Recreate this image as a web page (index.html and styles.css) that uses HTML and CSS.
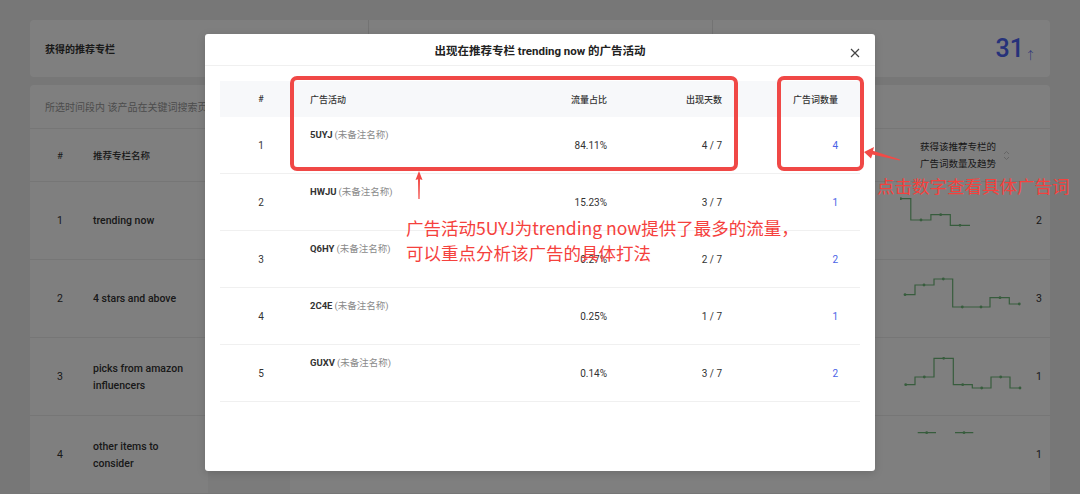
FILE: index.html
```html
<!DOCTYPE html>
<html lang="zh">
<head>
<meta charset="utf-8">
<title>推荐专栏广告活动</title>
<link rel="stylesheet" href="styles.css">
</head>
<body>
<div class="page">
  <section class="card stats">
    <div class="stat"><span class="stat-label">获得的推荐专栏</span></div>
    <div class="stat"><span class="stat-label">推荐专栏流量</span></div>
    <div class="stat stat-end"><span class="big">31</span><span class="up">↑</span></div>
  </section>

  <section class="card list">
    <div class="desc">所选时间段内 该产品在关键词搜索页面中出现在以下推荐专栏</div>
    <div class="bg-row bg-head">
      <div class="c-idx">#</div>
      <div class="c-name">推荐专栏名称</div>
      <div class="c-band"></div>
      <div class="c-mid"></div>
      <div class="c-trend head-trend">
        <span class="trend-title">获得该推荐专栏的<br>广告词数量及趋势</span>
        <svg class="sort" width="7" height="11" viewBox="0 0 7 11"><path d="M1 4 L3.5 1.5 L6 4 M1 7 L3.5 9.5 L6 7" fill="none" stroke="#c4c4c4" stroke-width="0.9"/></svg>
      </div>
    </div>
    <div class="bg-row">
      <div class="c-idx">1</div>
      <div class="c-name">trending now</div>
      <div class="c-band"></div>
      <div class="c-mid"></div>
      <div class="c-trend">
        <svg class="chart" width="125" height="77" viewBox="0 0 125 77">
          <path d="M0.7 16.7 H10.8 V38 H30.9 V32.7 H50.3 V43.3 H70" />
          <circle cx="0.7" cy="16.7" r="1.4"/><circle cx="21" cy="38" r="1.4"/><circle cx="40.7" cy="32.7" r="1.4"/><circle cx="60" cy="43.3" r="1.4"/>
        </svg>
        <span class="cnt">2</span>
      </div>
    </div>
    <div class="bg-row">
      <div class="c-idx">2</div>
      <div class="c-name">4 stars and above</div>
      <div class="c-band"></div>
      <div class="c-mid"></div>
      <div class="c-trend">
        <svg class="chart" width="125" height="77" viewBox="0 0 125 77">
          <path d="M5 34.7 H15 V25 H34 V19 H52.7 V47 H90 V37.7 H109.3 V44 H119.3" />
          <circle cx="5" cy="34.7" r="1.4"/><circle cx="24" cy="25" r="1.4"/><circle cx="43.3" cy="19" r="1.4"/><circle cx="62.3" cy="47" r="1.4"/><circle cx="81" cy="47" r="1.4"/><circle cx="100" cy="37.7" r="1.4"/><circle cx="119.3" cy="44" r="1.4"/>
        </svg>
        <span class="cnt">3</span>
      </div>
    </div>
    <div class="bg-row">
      <div class="c-idx">3</div>
      <div class="c-name">picks from amazon influencers</div>
      <div class="c-band"></div>
      <div class="c-mid"></div>
      <div class="c-trend">
        <svg class="chart" width="125" height="77" viewBox="0 0 125 77">
          <path d="M5.7 46.7 H15 V39 H34 V20.3 H53.3 V46.7 H72.3 V50 H91 V39 H110 V50 H120.7" />
          <circle cx="5.7" cy="46.7" r="1.4"/><circle cx="24.3" cy="39" r="1.4"/><circle cx="43.7" cy="20.3" r="1.4"/><circle cx="62.7" cy="46.7" r="1.4"/><circle cx="81.7" cy="50" r="1.4"/><circle cx="100.7" cy="39" r="1.4"/><circle cx="120" cy="50" r="1.4"/>
        </svg>
        <span class="cnt">1</span>
      </div>
    </div>
    <div class="bg-row">
      <div class="c-idx">4</div>
      <div class="c-name">other items to consider</div>
      <div class="c-band"></div>
      <div class="c-mid"></div>
      <div class="c-trend">
        <svg class="chart" width="125" height="77" viewBox="0 0 125 77">
          <path d="M17.7 16.7 H36 M55 16.7 H73.3" />
          <circle cx="26.7" cy="16.7" r="1.4"/><circle cx="64" cy="16.7" r="1.4"/>
        </svg>
        <span class="cnt">1</span>
      </div>
    </div>
  </section>
</div>

<div class="mask"></div>

<div class="modal">
  <div class="modal-head">
    <span class="modal-title">出现在推荐专栏 trending now 的广告活动</span>
    <svg class="close" width="10" height="10" viewBox="0 0 10 10"><path d="M1 1 L9 9 M9 1 L1 9" stroke="#444" stroke-width="1.2"/></svg>
  </div>
  <div class="modal-body">
    <div class="t-row t-head">
      <div class="t-idx">#</div>
      <div class="t-camp">广告活动</div>
      <div class="t-num">流量占比</div>
      <div class="t-num">出现天数</div>
      <div class="t-num t-kw">广告词数量</div>
    </div>
    <div class="t-row">
      <div class="t-idx">1</div>
      <div class="t-camp"><b>5UYJ</b> <span class="note">(未备注名称)</span></div>
      <div class="t-num">84.11%</div>
      <div class="t-num">4 / 7</div>
      <div class="t-num t-kw"><span class="link">4</span></div>
    </div>
    <div class="t-row">
      <div class="t-idx">2</div>
      <div class="t-camp"><b>HWJU</b> <span class="note">(未备注名称)</span></div>
      <div class="t-num">15.23%</div>
      <div class="t-num">3 / 7</div>
      <div class="t-num t-kw"><span class="link">1</span></div>
    </div>
    <div class="t-row">
      <div class="t-idx">3</div>
      <div class="t-camp"><b>Q6HY</b> <span class="note">(未备注名称)</span></div>
      <div class="t-num">0.27%</div>
      <div class="t-num">2 / 7</div>
      <div class="t-num t-kw"><span class="link">2</span></div>
    </div>
    <div class="t-row">
      <div class="t-idx">4</div>
      <div class="t-camp"><b>2C4E</b> <span class="note">(未备注名称)</span></div>
      <div class="t-num">0.25%</div>
      <div class="t-num">1 / 7</div>
      <div class="t-num t-kw"><span class="link">1</span></div>
    </div>
    <div class="t-row">
      <div class="t-idx">5</div>
      <div class="t-camp"><b>GUXV</b> <span class="note">(未备注名称)</span></div>
      <div class="t-num">0.14%</div>
      <div class="t-num">3 / 7</div>
      <div class="t-num t-kw"><span class="link">2</span></div>
    </div>
  </div>
</div>

<div class="mark box-a"></div>
<div class="mark box-b"></div>
<svg class="arrow-up" width="12" height="30" viewBox="0 0 12 30">
  <path d="M6 0 L9.5 9 L7 8.2 L6.6 28 L5.4 28 L5 8.2 L2.5 9 Z" fill="#f24a46"/>
</svg>
<svg class="arrow-left" width="40" height="20" viewBox="0 0 40 20">
  <path d="M0 7 L10 2 L9 5.8 L36 14.5 L35.6 15.6 L8.4 9.5 L7 13.5 Z" fill="#f24a46"/>
</svg>
<div class="note-text note-a">广告活动5UYJ为trending now提供了最多的流量，<br>可以重点分析该广告的具体打法</div>
<div class="note-text note-b">点击数字查看具体广告词</div>
</body>
</html>
```

FILE: styles.css
```css
* { box-sizing: border-box; }
html, body { margin: 0; padding: 0; }
body {
  width: 1080px;
  height: 494px;
  overflow: hidden;
  background: #eeeeee;
  font-family: Roboto, "Noto Sans CJK SC", sans-serif;
  color: #333;
  position: relative;
}
.page { padding: 20px 30px 0; }

.card { background: #fff; border-radius: 4px; }

.stats { height: 57px; display: flex; }
.stat { flex: 0 0 338px; display: flex; align-items: center; padding: 0 15px; }
.stat + .stat { border-left: 1px solid #e6e6e6; flex-basis: 344px; }
.stat:last-child { flex-basis: 338px; }
.stat-label { font-size: 10px; font-weight: 700; color: #333; }
.stat:nth-child(2) .stat-label { visibility: hidden; }
.stat-end { justify-content: flex-end; padding-right: 14px; align-items: center; }
.big { font-size: 25px; font-weight: 500; color: #4d64f5; line-height: 1; }
.up { font-size: 11px; color: #4d64f5; margin-left: 1px; margin-top: 12px; font-weight: 300; }

.list { margin-top: 8px; height: 420px; overflow: hidden; }
.desc {
  height: 44px; display: flex; align-items: center; padding-left: 15px;
  font-size: 10px; color: #9a9a9a; border-bottom: 1px solid #ececec;
}
.bg-row {
  display: grid;
  grid-template-columns: 63px 115px 82px 597px 163px;
  height: 78px;
  border-bottom: 1px solid #ececec;
  font-size: 10.5px;
}
.bg-head { height: 53px; font-size: 9.5px; color: #333; border-bottom: 1px solid #ececec; }
.bg-row > div { display: flex; align-items: center; }
.c-idx { padding-left: 27px; }
.c-name { font-weight: 500; line-height: 17px; padding-right: 14px; }
.c-band { background: #f6f6f6; }
.c-trend { position: relative; }
.bg-row > .c-trend { align-items: stretch; }
.bg-row > .head-trend { align-items: center; padding-left: 33px; }
.trend-title { line-height: 17px; }
.sort { margin-left: 7px; }
.chart { margin-left: 13px; flex: 0 0 auto; }
.chart path { fill: none; stroke: #6fb97a; stroke-width: 1.2; }
.chart circle { fill: #6fb97a; }
.cnt { margin-left: auto; padding-right: 8px; align-self: center; }

.mask { position: absolute; inset: 0; background: rgba(0, 0, 0, 0.5); }

.modal {
  position: absolute; left: 205px; top: 34px; width: 670px; height: 437px;
  background: #fff; border-radius: 3px;
  box-shadow: 0 2px 8px rgba(0,0,0,0.15);
}
.modal-head {
  height: 32px; border-bottom: 1px solid #f0f0f0;
  display: flex; align-items: center; justify-content: center; position: relative;
}
.modal-title { font-size: 11.5px; font-weight: 700; color: #222; }
.close { position: absolute; right: 15px; top: 14px; }
.modal-body { padding: 15px 15px 0; }
.t-row {
  display: grid;
  grid-template-columns: 82px 206px 120px 115px 117px;
  height: 57px;
  border-bottom: 1px solid #f0f0f0;
  font-size: 10px; color: #333;
}
.t-head { height: 36px; background: #f7f8fa; border-bottom: 0; font-size: 9px; font-weight: 500; }
.t-row > div { display: flex; align-items: center; }
.t-idx { justify-content: center; }
.t-camp { padding-left: 8px; }
.t-row:not(.t-head) .t-camp { align-items: flex-start; padding-top: 11px; font-size: 9.5px; line-height: 14px; }
.t-camp b { font-weight: 700; color: #333; }
.note { color: #8a8a8a; margin-left: 2px; }
.t-num { justify-content: flex-end; padding-right: 21px; }
.t-kw { padding-right: 22px; }
.link { color: #4a63e6; }

.mark {
  position: absolute; border: 4px solid #f04846; border-radius: 7px;
}
.box-a { left: 290px; top: 76px; width: 448px; height: 95px; }
.box-b { left: 777px; top: 76px; width: 87px; height: 95px; }
.arrow-up { position: absolute; left: 413px; top: 171px; }
.arrow-left { position: absolute; left: 864px; top: 145px; }

.note-text {
  position: absolute; color: #f5413d; font-size: 17.5px; line-height: 25px;
  font-family: "Noto Sans CJK SC", Roboto, sans-serif; white-space: nowrap;
}
.note-a { left: 406px; top: 215px; }
.note-b { left: 877px; top: 173px; }
```
